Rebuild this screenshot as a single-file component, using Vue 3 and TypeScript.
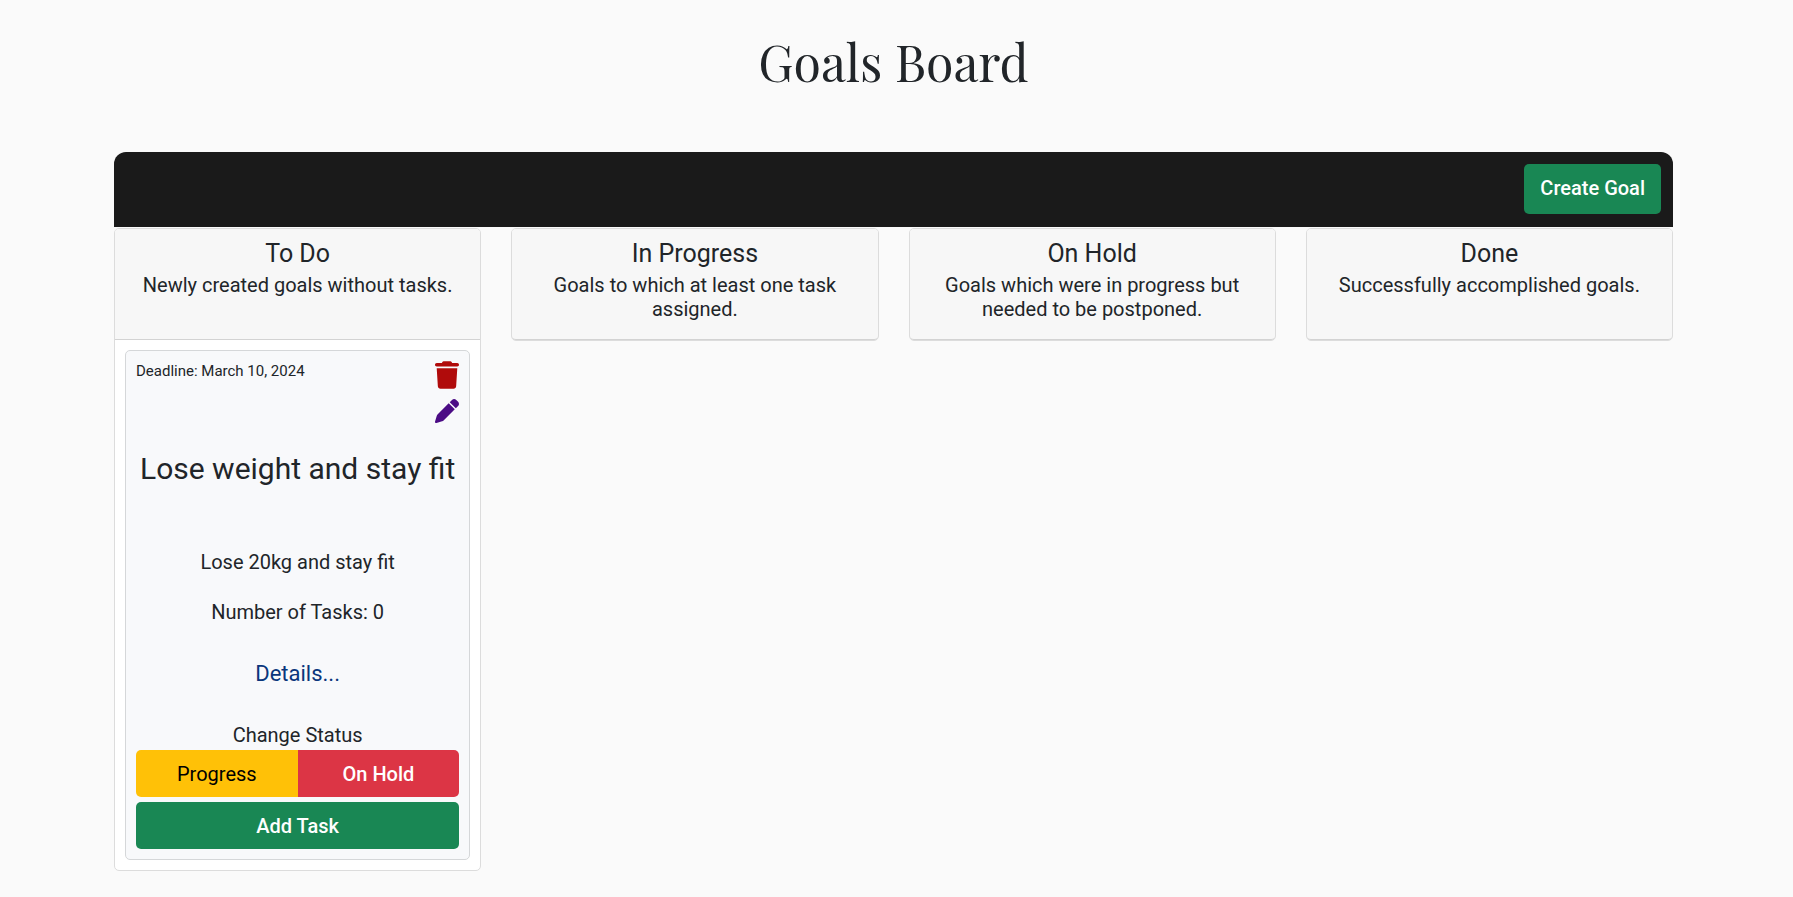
<script setup lang="ts">
interface Goal {
  id: number
  deadline: string
  title: string
  description: string
  tasks: number
}

interface Column {
  name: string
  hint: string
  goals: Goal[]
}

const columns: Column[] = [
  {
    name: 'To Do',
    hint: 'Newly created goals without tasks.',
    goals: [
      {
        id: 1,
        deadline: 'March 10, 2024',
        title: 'Lose weight and stay fit',
        description: 'Lose 20kg and stay fit',
        tasks: 0,
      },
    ],
  },
  { name: 'In Progress', hint: 'Goals to which at least one task assigned.', goals: [] },
  { name: 'On Hold', hint: 'Goals which were in progress but needed to be postponed.', goals: [] },
  { name: 'Done', hint: 'Successfully accomplished goals.', goals: [] },
]
</script>

<template>
  <main class="page">
    <h1 class="page-title">Goals Board</h1>
    <div class="toolbar">
      <button type="button" class="btn btn-green btn-create">Create Goal</button>
    </div>
    <div class="board">
      <section v-for="column in columns" :key="column.name" class="column">
        <header class="column-head">
          <h2 class="column-name">{{ column.name }}</h2>
          <p class="column-hint">{{ column.hint }}</p>
        </header>
        <div v-if="column.goals.length" class="column-body">
          <article v-for="goal in column.goals" :key="goal.id" class="goal">
            <div class="goal-top">
              <span class="deadline">Deadline: {{ goal.deadline }}</span>
              <div class="actions">
                <button type="button" class="icon-btn trash" aria-label="Delete goal">
                  <svg viewBox="0 0 448 512" width="24" height="28" aria-hidden="true">
                    <path
                      d="M135.2 17.7L128 32H32C14.3 32 0 46.3 0 64S14.3 96 32 96H416c17.7 0 32-14.3 32-32s-14.3-32-32-32H320l-7.2-14.3C307.4 6.8 296.3 0 284.2 0H163.8c-12.1 0-23.2 6.8-28.6 17.7zM416 128H32L53.2 467c1.6 25.3 22.6 45 47.9 45H346.9c25.3 0 46.3-19.7 47.9-45L416 128z"
                    />
                  </svg>
                </button>
                <button type="button" class="icon-btn pen" aria-label="Edit goal">
                  <svg viewBox="0 0 512 512" width="24" height="24" aria-hidden="true">
                    <path
                      d="M362.7 19.3L314.3 67.7 444.3 197.7l48.4-48.4c25-25 25-65.5 0-90.5L453.3 19.3c-25-25-65.5-25-90.5 0zm-71 71L58.6 323.5c-10.4 10.4-18 23.3-22.2 37.4L1 481.2C-1.5 489.7 .8 498.8 7 505s15.3 8.5 23.7 6.1l120.3-35.4c14.1-4.2 27-11.8 37.4-22.2L421.7 220.3 291.7 90.3z"
                    />
                  </svg>
                </button>
              </div>
            </div>
            <h3 class="goal-title">{{ goal.title }}</h3>
            <p class="goal-text">{{ goal.description }}</p>
            <p class="goal-tasks">Number of Tasks: {{ goal.tasks }}</p>
            <a href="#" class="details">Details...</a>
            <p class="status-label">Change Status</p>
            <div class="btn-group">
              <button type="button" class="btn btn-yellow">Progress</button>
              <button type="button" class="btn btn-red">On Hold</button>
            </div>
            <button type="button" class="btn btn-green">Add Task</button>
          </article>
        </div>
      </section>
    </div>
  </main>
</template>

<style>
body {
  margin: 0;
  background: #fafafa;
}
</style>

<style scoped>
* {
  box-sizing: border-box;
}

.page {
  padding: 30px 120px 24px 114px;
  color: #212529;
  font-family: Roboto, 'Liberation Sans', sans-serif;
  font-size: 20px;
  line-height: 24px;
  text-align: center;
}

h1,
h2,
h3,
p {
  margin: 0;
  font-weight: 400;
}

.page-title {
  margin-bottom: 58px;
  font-family: 'Playfair Display', 'Liberation Serif', serif;
  font-size: 50px;
  line-height: 64px;
}

.toolbar {
  display: flex;
  justify-content: flex-end;
  padding: 12px 12px 13px;
  background: #1a1a1a;
  border-radius: 12px 12px 0 0;
}

.btn {
  height: 47px;
  padding: 0 16px;
  border: 0;
  border-radius: 5px;
  color: #fff;
  font: inherit;
  font-weight: 500;
  cursor: pointer;
}

.btn-green {
  background: #198754;
}

.btn-yellow {
  background: #ffc107;
  color: #000;
  font-weight: 400;
}

.btn-red {
  background: #dc3545;
}

.btn-create {
  height: 50px;
  padding-bottom: 2px;
}

.board {
  display: grid;
  grid-template-columns: repeat(4, minmax(0, 1fr));
  gap: 30px;
  align-items: start;
  padding-top: 1px;
}

.column {
  background: #fff;
  border: 1px solid #dcdcdc;
  border-radius: 5px;
}

.column-head {
  min-height: 111px;
  padding: 10px 20px 18px;
  background: #f7f7f7;
  border-bottom: 1px solid #d3d3d3;
  border-radius: 4px 4px 0 0;
}

.column-head:last-child {
  border-radius: 4px;
}

.column-name {
  margin-bottom: 4px;
  font-size: 25px;
  line-height: 30px;
}

.column-body {
  padding: 10px;
}

.goal {
  display: flex;
  flex-direction: column;
  padding: 10px;
  background: #f8f9fb;
  border: 1px solid #d5d7d9;
  border-radius: 5px;
}

.goal-top {
  display: flex;
  justify-content: space-between;
  align-items: flex-start;
  margin-bottom: 28px;
}

.deadline {
  font-size: 15px;
  line-height: 20px;
}

.actions {
  display: flex;
  flex-direction: column;
  gap: 10px;
}

.icon-btn {
  padding: 0;
  border: 0;
  background: none;
  cursor: pointer;
}

.icon-btn svg {
  display: block;
  fill: currentColor;
}

.trash {
  color: #b00b0b;
}

.pen {
  color: #4b0c85;
}

.goal-title {
  margin-bottom: 63px;
  font-size: 30px;
  line-height: 36px;
}

.goal-text {
  margin-bottom: 26px;
}

.goal-tasks {
  margin-bottom: 37px;
}

.details {
  align-self: center;
  margin-bottom: 36px;
  color: #0a367c;
  font-size: 22px;
  line-height: 26px;
  text-decoration: none;
}

.status-label {
  margin-bottom: 3px;
}

.btn-group {
  display: grid;
  grid-template-columns: 1fr 1fr;
  margin-bottom: 5px;
}

.btn-group .btn:first-child {
  border-radius: 5px 0 0 5px;
}

.btn-group .btn:last-child {
  border-radius: 0 5px 5px 0;
}
</style>
